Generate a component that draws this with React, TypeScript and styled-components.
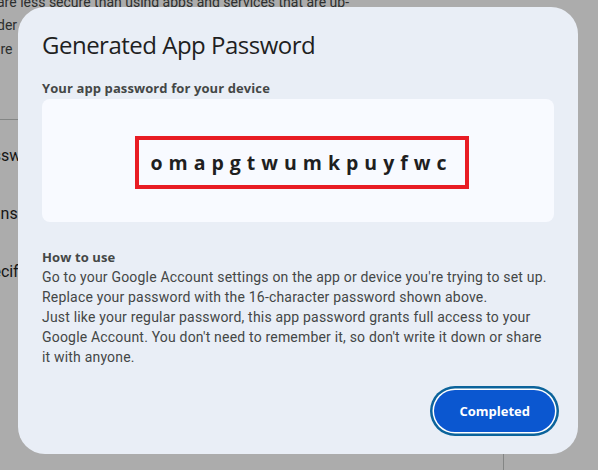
import React from 'react'
import styled, { createGlobalStyle } from 'styled-components'

const GlobalStyle = createGlobalStyle`
  html, body {
    margin: 0;
    padding: 0;
    background: #ffffff;
  }
  body {
    font-family: Roboto, "Liberation Sans", Arial, sans-serif;
  }
`

const Screen = styled.div`
  position: relative;
  width: 598px;
  height: 470px;
  overflow: hidden;
  background: #ffffff;
`

// page behind the dialog, only its left edge shows
const Page = styled.div`
  display: flex;
  flex-direction: column;
`

const Intro = styled.p`
  margin: -9.5px 0 0 -3px;
  width: 400px;
  font-size: 14px;
  line-height: 23.5px;
  color: #444746;
  white-space: pre;
`

const Divider = styled.hr`
  border: none;
  border-top: 1px solid #c4c7c5;
  margin: 58px 0 0;
  width: 560px;
`

const SettingRow = styled.div<{ $gap: number }>`
  margin: ${p => p.$gap}px 0 0 -26px;
  font-size: 16px;
  line-height: 24px;
  color: #1f1f1f;
`

const BottomBar = styled.div`
  display: flex;
  justify-content: flex-end;
  width: 504px;
  margin-top: 120px;
`

const BottomDivider = styled.div`
  width: 1px;
  height: 80px;
  background: #c4c7c5;
`

const Scrim = styled.div`
  position: absolute;
  inset: 0;
  background: rgba(0, 0, 0, 0.325);
  display: flex;
  align-items: flex-start;
  padding: 7px 0 0 18px;
`

const Dialog = styled.div`
  width: 560px;
  height: 447px;
  box-sizing: border-box;
  background: #e9eef6;
  border-radius: 27px;
  padding: 22px 23px 22px 24px;
  display: flex;
  flex-direction: column;
`

const Title = styled.h1`
  margin: 0;
  font-family: "Open Sans", Roboto, sans-serif;
  font-weight: 400;
  font-size: 24px;
  line-height: 32px;
  letter-spacing: -0.5px;
  color: #1f1f1f;
`

const Label = styled.div<{ $top: number }>`
  margin-top: ${p => p.$top}px;
  font-family: "Open Sans", Roboto, sans-serif;
  font-weight: 700;
  font-size: 13px;
  line-height: 18px;
  letter-spacing: 0.1px;
  color: #444746;
`

const PasswordPanel = styled.div`
  margin: 2.5px 1px 0 0;
  height: 123px;
  box-sizing: border-box;
  padding: 37px 0 0 93px;
  background: #f8faff;
  border-radius: 8px;
  display: flex;
  align-items: flex-start;
`

const Highlight = styled.div`
  width: 334px;
  height: 53px;
  box-sizing: border-box;
  border: 4px solid #e81c24;
  display: flex;
  align-items: center;
  justify-content: center;
`

const PasswordText = styled.span`
  font-family: "Open Sans", Roboto, sans-serif;
  font-weight: 700;
  font-size: 19.5px;
  letter-spacing: 6px;
  margin-right: 1px;
  color: #1f1f1f;
`

const Body = styled.p`
  margin: 1px 0 0;
  font-size: 14px;
  line-height: 20px;
  letter-spacing: 0.19px;
  color: #444746;
`

const Actions = styled.div`
  margin-top: auto;
  display: flex;
  justify-content: flex-end;
`

const PrimaryButton = styled.button`
  height: 42px;
  padding: 0 25px;
  border: none;
  border-radius: 21px;
  background: #0b57d0;
  color: #ffffff;
  font-family: "Open Sans", Roboto, sans-serif;
  font-weight: 700;
  font-size: 13px;
  cursor: pointer;
  box-shadow: 0 0 0 1.5px #ffffff, 0 0 0 4px #0b639b;
`

export default function App() {
  return (
    <>
      <GlobalStyle />
      <Screen>
        <Page>
          <Intro>
            {'are less secure than using apps and services that are up-\n'}
            {'der apps and devices may not support sign-in\n'}
            {' re    you create an app password'}
          </Intro>
          <Divider />
          <SettingRow $gap={24}>Passwords</SettingRow>
          <SettingRow $gap={34}>Scans</SettingRow>
          <SettingRow $gap={34}>Specific</SettingRow>
          <BottomBar>
            <BottomDivider />
          </BottomBar>
        </Page>
        <Scrim>
          <Dialog>
            <Title>Generated App Password</Title>
            <Label $top={17.5}>Your app password for your device</Label>
            <PasswordPanel>
              <Highlight>
                <PasswordText>omapgtwumkpuyfwc</PasswordText>
              </Highlight>
            </PasswordPanel>
            <Label $top={26}>How to use</Label>
            <Body>
              Go to your Google Account settings on the app or device you're trying to set up.
              <br />
              Replace your password with the 16-character password shown above.
              <br />
              Just like your regular password, this app password grants full access to your
              <br />
              Google Account. You don't need to remember it, so don't write it down or share
              <br />
              it with anyone.
            </Body>
            <Actions>
              <PrimaryButton>Completed</PrimaryButton>
            </Actions>
          </Dialog>
        </Scrim>
      </Screen>
    </>
  )
}
